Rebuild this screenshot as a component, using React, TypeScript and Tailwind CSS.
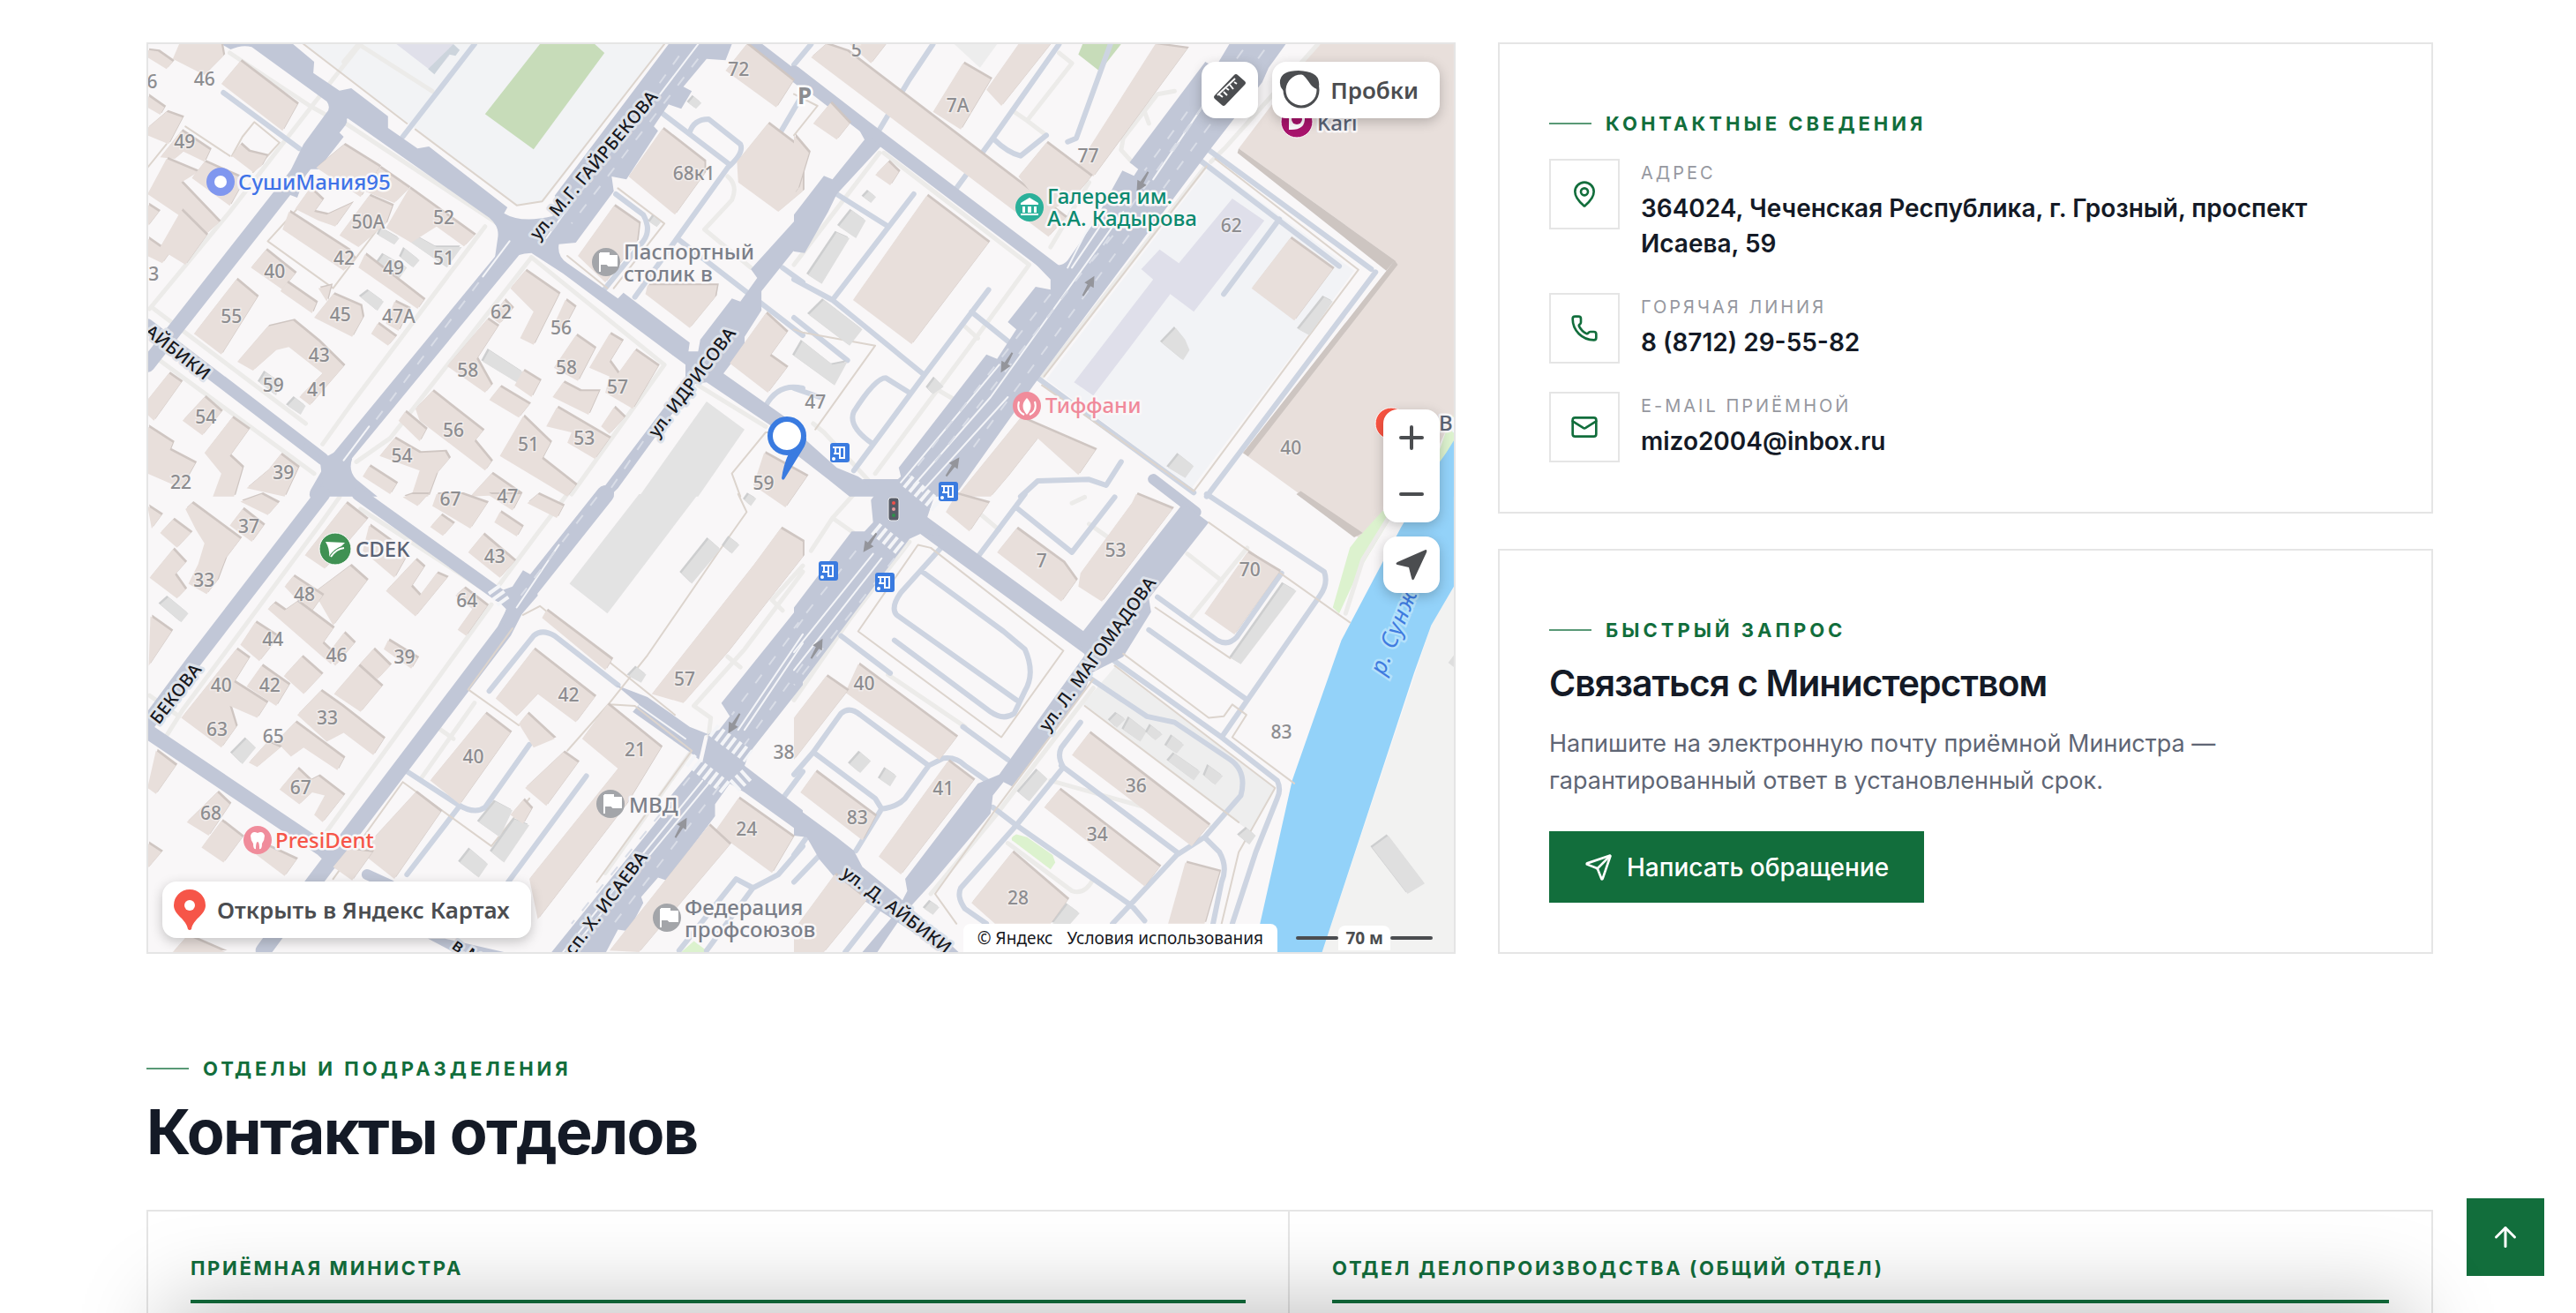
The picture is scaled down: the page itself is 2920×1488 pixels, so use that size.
import { ArrowUp, Mail, MapPin, Phone, Send } from "lucide-react";
import type { ReactNode } from "react";

type Label = [string, number, number];

type Tile = {
  x: number;
  y: number;
  sx: number;
  sy: number;
  areas: [string, string][];
  paths: string[];
  drives: string[];
  roads: [string, number][];
  junctions: string[];
  fences: string[];
  buildings: string[];
  sheds: string[];
  lanes: string[];
  dashes: string[];
  zebras: string[];
  numbers: Label[];
};

// every tile keeps its own coordinate grid
const tiles: Tile[] = [
  {
    x: 160,
    y: 40,
    sx: 1 / 2.0907,
    sy: 1 / 3,
    areas: [
      ["M385 30H1240L955 565L890 578Z", "#f2f3f5"],
      ["M945 30H1075L1098 60L930 388L815 268Z", "#c7dcb9"],
      ["M605 30H740L730 70L695 130Z", "#e0e0ea"],
      ["M740 30L755 50L745 70L730 65L695 133L680 115Z", "#ccd4dc"],
      ["M1340 1245L1430 1340L1320 1568H1180Z", "#e3e3e3"],
    ],
    paths: [
      "M520 30L405 240L210 600L20 930",
      "M210 60L400 240L450 280",
      "M480 295L850 645",
      "M480 90L515 30L690 190",
      "M815 650L500 1250L430 1390",
      "M925 755L590 1370L510 1450",
      "M925 755L1240 1120L1110 1380L1020 1560",
      "M30 930L390 1320",
      "M20 1080L410 1490",
      "M1320 1190L1480 1330",
      "M1390 480Q1415 510 1400 560L1335 660L1445 790",
    ],
    drives: [
      "M790 30L620 345",
      "M195 195L375 385",
      "M1235 265L1395 440L1270 690L1170 890",
      "M1300 330Q1310 285 1345 285L1420 370Q1430 400 1390 450",
      "M1125 540L1190 610Q1210 660 1190 700L1100 860",
      "M1270 690L1568 1020",
      "M1568 200L1515 330",
      "M1480 1260Q1510 1180 1568 1200",
      "M1520 790L1568 840",
    ],
    roads: [
      ["M470 290L360 490L15 1120", 17],
      ["M15 985L430 1440", 14],
      ["M890 710L460 1460L420 1560", 20],
      ["M1450 30L1568 160", 13],
    ],
    junctions: [
      "M190 30H360L410 90L408 128L470 188L498 180L585 275V315L655 385L682 378L868 585L860 605Q900 640 975 615L990 570L980 545L1250 30H1400L1385 85L1340 80L1285 175L1305 190L1280 250L1250 235L1215 310L1225 325L1150 490L1115 480L1120 530L1030 705L990 710Q985 750 1010 775L1130 895L1143 875L1300 1045L1297 1075H1320L1325 1035L1400 895L1420 905L1460 825L1445 795L1568 600V715L1545 735L1470 870V935L1430 1025V1055L1380 1150L1568 1340V1400L1340 1180L1310 1185L1130 1540L1110 1568H1080L1290 1170V1120L1000 810L925 740Q890 740 870 770L835 790L845 690Q850 650 825 620L490 283Q465 290 462 320L480 345L420 455L395 455L370 552L330 530L385 370L440 262Q450 245 440 225L262 40Q240 30 212 48Z",
      "M385 1385L430 1440L480 1400L500 1440Q490 1480 510 1510L560 1568H410L430 1520L425 1460L385 1410Z",
    ],
    fences: [
      "M650 320L890 578L950 565L1240 30",
      "M385 30L630 300",
      "M1130 520L1240 640L1120 860",
      "M1010 750L1105 860",
      "M215 410L240 345L268 295L328 365L265 465",
      "M370 590L300 700L455 860L560 660",
      "M105 310L210 410",
      "M15 450L60 370",
      "M1568 1350H1480L1400 1490L1420 1568",
    ],
    buildings: [
      "15,50 40,55 75,90 60,115 15,75",
      "90,30 190,30 195,70 150,135 75,80",
      "235,88 370,235 335,325 190,165",
      "15,205 55,245 45,270 15,245",
      "15,315 60,260 98,280 65,370 15,340",
      "95,325 163,390 150,430 100,395 80,420 45,415",
      "60,420 135,465 95,500 185,635 155,675 15,540",
      "150,430 245,490 210,580 120,485",
      "215,410 235,370 255,395 298,410 285,445 265,465",
      "15,575 42,600 15,650",
      "95,595 155,680 105,780 65,745 50,775 15,750 15,690 45,720",
      "480,372 565,448 520,550 415,450",
      "400,520 430,560 410,600 440,610 500,570 460,650 420,630 365,590",
      "565,450 635,520 600,570 530,530",
      "350,600 490,730 505,760 480,800 335,660",
      "540,545 595,580 580,640 515,720 470,680",
      "635,520 790,680 765,718 700,650 640,705 580,655",
      "295,730 365,810 335,865 260,790",
      "345,840 415,910 405,945 330,870",
      "420,860 450,850 440,905",
      "530,745 670,900 655,930 515,790",
      "225,830 275,890 190,1085 125,1015",
      "455,880 520,920 525,960 500,1025 410,960",
      "600,905 635,930 610,1005 580,980",
      "560,980 603,1025 585,1055 545,1015",
      "300,990 360,970 420,1040 480,1125 400,1258 375,1230 430,1150 350,1060 320,1070 265,1140 228,1110",
      "910,800 990,880 930,1052 898,1030 930,940 875,860",
      "860,900 880,930 850,980 830,960",
      "1005,900 1028,925 1000,1000 978,985",
      "820,965 845,990 795,1100 830,1190 815,1215 725,1125",
      "1030,1020 1075,1065 1035,1175 978,1130",
      "1110,1015 1140,1040 1110,1110 1130,1150 1170,1070 1225,1125 1165,1270 1100,1215 1110,1160 1062,1130",
      "850,1195 920,1255 895,1300 825,1240",
      "905,1140 945,1175 925,1230 885,1190",
      "1000,1180 1040,1210 1085,1210 1060,1290 975,1230",
      "985,1265 1110,1370 1075,1440 1010,1385 1020,1350 960,1330",
      "1120,1265 1145,1300 1110,1355 1090,1330",
      "905,1295 970,1385 950,1440 1030,1530 1010,1568 850,1430",
      "690,1210 810,1345 790,1380 830,1450 815,1480 660,1310 650,1270",
      "625,1280 675,1340 660,1380 610,1310",
      "600,1370 660,1420 720,1415 730,1440 700,1490 680,1568 640,1568 660,1480 565,1430",
      "540,1465 605,1525 590,1560 525,1500",
      "830,1490 900,1560 780,1568",
      "65,1150 95,1180 30,1310 15,1290 15,1240",
      "150,1230 190,1280 145,1360 98,1310",
      "215,1300 255,1340 210,1430 240,1470 220,1568 170,1568 190,1490 150,1420",
      "15,1330 75,1385 68,1410 128,1455 95,1540 15,1490",
      "330,1425 372,1470 340,1568 250,1540 300,1480",
      "1435,30 1545,155 1505,245 1385,120",
      "1235,318 1335,430 1335,470 1265,610 1155,480",
      "1485,300 1568,390 1568,530 1510,600 1415,500 1412,430",
      "1120,580 1180,640 1175,700 1100,840 1035,750",
      "1200,850 1365,850 1360,890 1300,995 1195,880",
      "1480,945 1530,1010 1490,1090 1530,1130 1485,1215 1395,1115",
    ],
    sheds: [
      "570,655 612,690 600,712 562,680",
      "650,680 700,720 760,720 725,790 640,705",
      "625,725 660,765 645,790 615,755",
      "575,745 630,790 610,830 560,775",
      "540,868 575,905 560,937 520,890",
      "825,1070 905,1145 890,1180 810,1110",
      "295,1145 330,1180 320,1225 280,1180",
      "365,1232 390,1260 378,1290 347,1260",
      "1310,208 1328,230 1315,250 1297,230",
      "1215,615 1232,635 1222,652 1205,635",
    ],
    lanes: ["M1320 30L1230 200", "M960 690L1010 590", "M873 700L810 820", "M540 1330L480 1445"],
    dashes: ["M1275 70L1100 420L960 690", "M1320 80L1020 640", "M800 840L550 1320", "M1190 1380L1100 1568"],
    zebras: [],
    numbers: [
      ["6", 26, 160], ["46", 150, 150], ["49", 103, 362], ["50А", 538, 635],
      ["52", 717, 620], ["51", 717, 760], ["49", 598, 793], ["42", 481, 760],
      ["40", 316, 803], ["3", 30, 812], ["55", 214, 958], ["45", 472, 952],
      ["47А", 610, 958], ["62", 853, 943], ["56", 995, 995], ["58", 774, 1140],
      ["58", 1008, 1130], ["57", 1129, 1198], ["43", 422, 1090], ["59", 313, 1190],
      ["41", 418, 1207], ["54", 153, 1300], ["56", 740, 1345], ["51", 918, 1393],
      ["53", 1050, 1372], ["54", 618, 1432], ["39", 337, 1488], ["22", 94, 1522],
      ["59", 1475, 1525], ["72", 1416, 118], ["68к1", 1310, 472],
    ],
  },
  {
    x: 900,
    y: 40,
    sx: 1 / 2.063,
    sy: 1 / 3,
    areas: [
      ["M975 440L1310 800L1200 1020L930 1540L590 1170Z", "#f2f3f6"],
      ["M675 30H765L715 122L665 65Z", "#c7dcb9"],
      ["M375 30H475L435 110Z", "#ededed"],
      ["M1543 1270L1500 1450L1440 1568H1543Z", "#dcf2ce"],
      ["M1543 1385L1505 1460L1480 1568H1543Z", "#93d2f9"],
      ["M1025 555L1100 630L935 940L880 880L700 1225L655 1180L840 830L812 795L855 728L900 775Z", "#dfdfea"],
      ["M1225 30H1543V1290L1510 1390L1320 1705L1050 1420L1405 765L1040 385Z", "#e8dfdb"],
      ["M1040 385L1405 765L1385 800L1037 400ZM1405 765L1050 1420L1062 1432L1412 780Z", "#cdc5c1"],
    ],
    paths: [
      "M620 60L650 95L545 290L510 255",
      "M545 290L590 340",
      "M890 190L850 200L770 350L765 390L790 430",
      "M820 260L830 300",
      "M200 400L0 780",
      "M210 400L550 780L410 1060L190 1490",
      "M960 450L580 1160",
      "M1225 30L1010 380L975 430",
      "M600 720L690 500",
      "M400 990L430 1030",
      "M330 1200L400 1260",
      "M45 1320L70 1350L185 1530",
    ],
    drives: [
      "M325 30L270 150L200 320",
      "M620 30L465 350L380 520",
      "M465 350Q500 400 530 410L590 340",
      "M740 30L660 350L640 362",
      "M100 540L215 645",
      "M280 540L90 900",
      "M0 830L90 900L305 1155L140 1480",
      "M455 865L305 1155",
      "M415 940L500 1040",
      "M0 960L125 1105",
      "M270 1215L215 1165Q190 1165 140 1280Q125 1330 185 1390",
      "M0 1200L60 1230",
      "M945 420L1275 785",
      "M970 390L1350 795",
      "M1135 625L1005 880",
      "M1360 805L965 1568",
      "M565 1160L935 1555",
      "M765 1450L730 1530L690 1510L570 1515L530 1568",
      "M40 30L0 100",
    ],
    roads: [["M0 125L165 310L610 800", 15]],
    junctions: [
      "M1018 30L985 110L962 90L785 432L805 455L795 478L768 460L700 640L640 765Q620 800 590 760L560 770L600 830V865L565 855L500 975L520 1000L475 1100L450 1085L245 1470L250 1500L200 1568H375L560 1190L975 385L1095 160L1110 110L1150 30Z",
      "M150 315L205 375L100 540L80 600L25 740L0 735V610L70 478L90 490L165 355Z",
      "M0 1340L100 1470L150 1500L220 1568H130L80 1510L0 1420Z",
    ],
    fences: [
      "M985 420L1320 797L1200 1030L935 1550L580 1190",
      "M965 445L585 1160",
      "M0 200L55 240L0 340",
      "M0 1000L20 1010L190 1055L50 1340",
    ],
    buildings: [
      "75,30 125,55 635,620 595,685 40,75",
      "130,30 215,30 180,95",
      "395,95 460,150 390,320 325,260",
      "525,30 600,30 485,240 450,185",
      "845,30 920,45 700,480 665,440",
      "590,365 695,480 650,560 590,600 525,480",
      "85,230 130,300 100,355 45,300",
      "220,430 245,465 225,510 190,475",
      "310,545 455,705 275,1050 138,900",
      "0,340 35,400 10,520 0,540",
      "1160,690 1260,795 1170,970 1070,860",
      "530,1300 705,1410 665,1495 570,1370 500,1500 460,1568 380,1568",
      "-70,1420 30,1500 -20,1605 -95,1530",
    ],
    sheds: [
      "135,595 168,630 145,690 105,650",
      "100,670 130,690 65,845 33,815",
      "70,900 160,1000 130,1055 35,950",
      "20,1040 90,1120 125,1110 95,1190 0,1090",
      "330,1165 350,1195 325,1220 312,1200",
      "175,530 192,550 180,570 162,550",
      "1240,890 1260,905 1205,1020 1180,1000",
      "893,995 915,1035 925,1070 910,1105 860,1045",
      "900,1425 935,1465 915,1505 875,1470",
    ],
    lanes: ["M975 200L840 490", "M770 600L460 1230L280 1530", "M480 1120L250 1520", "M500 1230L300 1550", "M700 620L640 790", "M720 640L650 790"],
    dashes: ["M1050 50L720 720L330 1450", "M1100 50L980 290L420 1400", "M920 260L820 460", "M600 880L270 1500", "M780 620L690 780", "M930 300L870 430"],
    zebras: ["M265 1515L335 1600"],
    numbers: [
      ["5", 146, 50], ["7А", 383, 240], ["77", 688, 410], ["62", 1023, 647],
      ["47", 50, 1247], ["40", 1162, 1403],
    ],
  },
  {
    x: 160,
    y: 560,
    sx: 1 / 2.0907,
    sy: 1 / 2.958,
    areas: [
      ["M1180 0H1320L1105 400L1015 300Z", "#e3e3e3"],
      ["M1310 1498L1345 1535H1280Z", "#dcf2ce"],
    ],
    paths: [
      "M470 10L430 90L100 720L60 810",
      "M20 675L90 745",
      "M520 50L835 340",
      "M1010 0L940 130L840 320",
      "M830 370L440 1130",
      "M790 700L665 950",
      "M700 780L740 820",
      "M1568 260L1430 520L1310 710L1350 750L1345 810",
      "M1390 545L1420 580",
      "M1300 870L1100 1270",
      "M1568 240L1495 355L1520 390",
    ],
    drives: [
      "M825 660L930 475Q950 450 980 475L1130 640",
      "M625 925L750 1040Q790 1075 815 1050L920 840",
      "M755 1045L630 1275",
      "M1055 945L870 1300",
      "M1275 1530L1410 1290L1450 1320L1510 1275L1568 1180",
      "M1450 1320L1340 1530",
      "M1568 930L1510 1040",
    ],
    roads: [
      ["M430 0L125 560L10 780", 17],
      ["M15 795L430 1190L460 1230", 17],
      ["M1100 0L920 320", 20],
      ["M900 350L860 460L410 1300L290 1530", 18],
      ["M515 0L850 340", 15],
      ["M535 1275L590 1310", 12],
    ],
    junctions: [
      "M830 335L880 310L905 255L930 275L940 340L870 455L855 430L865 385Z",
      "M1125 640L1200 680L1300 780L1345 805L1330 900L1305 870L1165 730L1180 705Z",
      "M1568 360L1375 700L1395 745L1370 790L1335 810L1320 900L1250 1020L1255 1040L970 1540H1100L1130 1460L1155 1465L1190 1370L1185 1350L1225 1285L1245 1295L1360 1080V1040L1395 970L1430 1000L1568 1140V1060L1430 910L1440 870L1568 640Z",
      "M680 1490H720L860 1535H740Z",
    ],
    fences: [
      "M1415 0L1435 60L1370 190L1200 540L1110 700L1010 860",
      "M880 450L775 655L895 775",
      "M905 405L945 375L1265 740",
      "M620 965L830 1180L920 1020",
      "M620 965L455 1290",
      "M1110 705L1170 710L1305 860L1080 1300",
    ],
    buildings: [
      "15,40 48,70 25,115",
      "75,85 118,130 85,180 45,130",
      "120,30 235,150 200,215 180,290 155,335 112,300 135,235 150,165 130,120 105,50",
      "240,50 290,105 262,160 210,105",
      "285,0 325,30 300,70 235,25",
      "75,185 105,230 80,270 105,320 85,350 20,280",
      "22,410 72,460 18,575",
      "485,30 535,85 435,250 388,205",
      "540,105 632,200 600,280 525,190",
      "650,220 670,245 640,310 660,340 700,265 725,280 650,410 580,325",
      "495,240 535,290 455,440 410,330",
      "360,275 430,340 400,400 340,310",
      "315,365 340,390 370,360 455,450 430,500 460,540 450,570 300,385",
      "480,465 505,500 460,575 440,540",
      "270,430 325,480 280,560 235,505",
      "225,520 255,550 220,630 298,700 275,750 210,710 225,780 190,850 95,750",
      "285,575 350,640 320,710 250,645",
      "380,545 428,605 385,670 338,610",
      "585,490 655,550 640,585 575,520",
      "550,520 590,575 560,620 515,575",
      "515,575 570,645 520,730 457,670",
      "425,660 475,710 575,820 550,875 480,800 440,830 370,740",
      "365,765 480,885 465,925 385,850 355,880 320,830",
      "300,830 330,850 275,915 255,900",
      "370,920 400,960 420,945 480,1010 430,1100 410,1075 435,1010 405,1000 375,1040 328,990",
      "180,1000 210,1040 160,1145 108,1100",
      "190,1095 240,1150 195,1235 143,1185",
      "35,860 82,910 35,1005 15,985",
      "15,1170 48,1200 15,1255",
      "300,1180 368,1225 340,1280 265,1200",
      "640,0 680,0 655,40 620,10",
      "700,0 760,0 820,30 780,115 690,40",
      "820,0 900,0 880,55",
      "940,0 1000,40 985,80 915,30",
      "710,70 740,100 715,140 685,110",
      "850,60 903,110 890,142 837,95",
      "810,135 885,225 850,280 775,195",
      "765,315 820,375 770,475 750,455 785,385 745,340",
      "650,1000 710,1065 600,1290 520,1200",
      "490,1190 548,1200 500,1295 455,1250",
      "815,735 875,800 755,1040 685,960",
      "930,520 1075,680 1030,765 940,670 890,745 840,685",
      "915,735 980,820 930,850 895,770",
      "1000,865 1035,900 960,1045 910,985",
      "905,1025 925,1055 905,1105 875,1075",
      "1105,705 1232,850 1150,1040 940,1425 920,1290 1130,920 1045,820",
      "960,390 1115,555 1100,590 950,415",
      "1515,115 1568,160 1568,210 1490,350 1390,530 1285,700 1210,670 1450,240",
      "1415,1020 1545,1150 1495,1270 1360,1130",
      "1345,1110 1395,1175 1180,1535 1110,1530",
      "75,1535 110,1480 200,1535",
    ],
    sheds: [
      "1345,150 1373,185 1305,300 1280,265",
      "1395,145 1418,170 1400,200 1380,175",
      "65,345 112,400 95,430 45,370",
      "250,820 272,850 240,905 215,870",
      "840,1030 880,1060 850,1150 800,1100",
      "885,1090 920,1110 860,1235 830,1200",
      "780,1190 822,1240 800,1285 755,1235",
      "1175,580 1197,605 1185,632 1155,610",
      "1440,0 1458,15 1445,40 1430,20",
    ],
    lanes: ["M1568 470L1415 790", "M1568 500L1430 790", "M1330 960L1000 1535", "M1345 970L1015 1535", "M1180 710L1290 820", "M990 170L890 380"],
    dashes: ["M1568 420L1400 740", "M1568 570L1430 840", "M1300 950L1020 1440", "M1370 980L1120 1440", "M1080 10L900 340"],
    zebras: ["M1300 890L1390 990", "M1355 790L1440 880", "M1405 980L1440 935", "M835 315L860 365"],
    numbers: [
      ["67", 733, 18], ["47", 868, 10], ["37", 255, 108], ["43", 838, 210],
      ["33", 149, 290], ["48", 387, 337], ["64", 772, 357], ["44", 312, 487],
      ["46", 463, 540], ["39", 624, 547], ["40", 190, 641], ["42", 305, 641],
      ["57", 1288, 620], ["42", 1013, 675], ["33", 441, 750], ["63", 180, 790],
      ["65", 313, 812], ["21", 1171, 858], ["40", 787, 881], ["38", 1523, 867],
      ["67", 378, 985], ["68", 165, 1070], ["24", 1435, 1123],
    ],
  },
  {
    x: 900,
    y: 560,
    sx: 1 / 2.063,
    sy: 1 / 2.958,
    areas: [
      ["M1543 310L1490 440L1235 1535H1543Z", "#f2f2f1"],
      ["M1300 180L1370 50L1400 70L1320 260L1275 400L1260 380Z", "#dcf2ce"],
      ["M1543 -180L1420 110L1280 490L1165 960L1075 1535H1235L1450 600L1490 440L1543 310Z", "#93d2f9"],
      ["M520 1140Q505 1150 510 1160L600 1258L611 1235L605 1210L545 1150Z", "#dcf2ce"],
      ["M750 580L1125 985L1065 1130L675 705Z", "#eeeeee"],
      ["M1543 540L1530 565L1543 580Z", "#dedede"],
      ["M1175 0H1375L1380 50L1320 145Z", "#e8dfdb"],
      ["M1175 0L1310 145L1330 130L1320 120L1185 -10Z", "#cdc5c1"],
    ],
    paths: [
      "M920 200L1000 290",
      "M1060 180L930 410",
      "M500 1170L650 1330Q680 1345 700 1290",
      "M40 190L90 80L140 130",
      "M90 80L140 0",
      "M270 160L130 420L0 690",
      "M430 60L480 120",
      "M220 605L400 780",
      "M680 10L650 30",
      "M690 100L730 140",
      "M700 650L470 1080L320 1340",
      "M600 960L970 1110",
      "M1390 80L1330 220L1290 400",
    ],
    drives: [
      "M350 170L250 330Q225 380 240 405L520 690",
      "M235 490L460 730Q490 760 515 735L540 660Q565 600 540 520L490 460L300 260",
      "M110 475L225 600",
      "M395 780L500 890",
      "M540 0L430 210",
      "M520 45L650 195L750 10",
      "M965 0L1240 260Q1250 300 1230 340L1000 815",
      "M850 345L990 490Q1015 510 1035 480L1140 265",
      "M830 455L1060 690",
      "M750 560L1000 815L1130 960Q1140 990 1130 1020L1080 1200L1025 1440",
      "M685 610L825 745L890 765L1020 890Q1060 930 1045 1010L960 1150L895 1210L745 1440",
      "M960 1150L995 1200Q1015 1250 1000 1300L980 1440",
      "M625 910L900 1205",
      "M670 765L625 850Q615 880 630 915L520 1110L390 1320Q380 1350 400 1390L450 1440",
      "M465 1050L520 1110L790 1380L820 1430",
      "M0 940L45 865L110 735Q130 710 155 740L315 910L350 885Q380 880 400 910L450 960",
      "M45 865L190 1020L205 1055L145 1195",
      "M315 910L260 1020Q240 1050 205 1055",
      "M0 1300L60 1210",
      "M0 1210L30 1150",
      "M210 1370L120 1535",
    ],
    roads: [
      ["M270 70L690 510", 20],
      ["M840 -50L940 60", 12],
    ],
    junctions: [
      "M190 0L180 20L185 95L165 125H135L0 380V670L270 150L300 130L340 140L310 85L330 0L370 -50H160Z",
      "M910 30L970 95L830 350L835 395L770 545L695 600L680 660L510 980L490 965L465 1010L460 1070L325 1300L255 1410L195 1535H160L240 1400L265 1330L260 1290L430 970L480 940L650 600L680 540L665 480Z",
      "M0 1045L100 1150L140 1195L160 1250L245 1350L385 1535H350L150 1350L110 1310L60 1225L30 1150L0 1145Z",
    ],
    fences: [
      "M290 170L150 460L485 815L630 525L320 180Z",
      "M970 95L1300 430",
      "M770 535L970 750L1005 745L1025 705L1058 740L1025 815L1170 970",
      "M845 380L1020 550",
      "M750 575L1125 985L1040 1200L1000 1440",
      "M680 710L1040 1100",
      "M700 620L470 1060L330 1340L380 1440",
    ],
    buildings: [
      "520,115 630,230 660,290 625,360 475,195",
      "800,0 885,50 720,360 665,310 670,265 790,30",
      "380,0 455,30 410,125 355,60",
      "1060,195 1135,260 1030,470 960,400",
      "150,570 380,815 340,890 120,665",
      "75,610 125,660 0,890 0,750",
      "50,930 190,1080 160,1160 15,1000",
      "360,895 420,960 250,1275 198,1215",
      "690,800 970,1110 930,1180 650,875",
      "620,990 855,1250 820,1315 585,1050",
      "510,1200 640,1360 600,1440 470,1440 415,1370",
      "915,1235 995,1265 960,1440 875,1440",
      "95,1275 170,1360 70,1535 0,1535 0,1460",
    ],
    sheds: [
      "1145,300 1175,325 1045,570 1022,550",
      "155,865 180,895 155,935 130,905",
      "215,920 240,945 225,980 200,955",
      "570,925 593,955 550,1030 525,1000",
      "785,750 825,795 810,830 770,790",
      "755,735 775,755 755,783 738,760",
      "835,775 862,805 845,825 825,800",
      "885,810 912,840 895,870 870,845",
      "890,870 950,930 935,960 875,895",
      "970,910 1003,945 985,975 960,945",
      "1060,1120 1080,1145 1065,1175 1040,1145",
      "1390,1145 1475,1305 1435,1340 1352,1185",
      "320,1365 340,1385 325,1410 305,1390",
      "640,1375 668,1405 645,1443 605,1440",
    ],
    lanes: ["M185 200L0 530", "M205 215L0 590"],
    dashes: ["M145 190L0 450", "M235 215L0 640"],
    zebras: ["M190 115L255 190"],
    numbers: [
      ["7", 579, 225], ["53", 752, 190], ["70", 1066, 254], ["40", 164, 636],
      ["83", 1140, 800], ["36", 800, 980], ["41", 349, 988], ["83", 148, 1087],
      ["34", 709, 1142], ["28", 524, 1355],
    ],
  },
];

const streets: [string, number, number, number][] = [
  ["ул. М.Г. ГАЙРБЕКОВА", 610, 273, -50],
  ["ул. ИДРИСОВА", 745, 497, -53],
  ["АЙБИКИ", 163, 378, 38],
  ["БЕКОВА", 180, 822, -52],
  ["сп. Х. ИСАЕВА", 650, 1084, -53],
  ["ул. Л. МАГОМАДОВА", 1188, 830, -54],
  ["ул. Д. АЙБИКИ", 953, 992, 37],
  ["в.М", 511, 1074, 36],
];

const places: [string[], number, number, string][] = [
  [["СушиМания95"], 270, 215, "#3f73e8"],
  [["Паспортный", "столик в"], 707, 294, "#7b7f89"],
  [["Галерея им.", "А.А. Кадырова"], 1187, 231, "#0b8a70"],
  [["Тиффани"], 1185, 468, "#f0899a"],
  [["CDEK"], 403, 631, "#5a6375"],
  [["PresiDent"], 312, 961, "#f65548"],
  [["МВД"], 713, 921, "#7b7f89"],
  [["Федерация", "профсоюзов"], 776, 1037, "#7b7f89"],
  [["Kari"], 1493, 148, "#5a6375"],
  [["Ви"], 1631, 488, "#5a6375"],
];

// centre of each arrow and its turn
const arrows: [number, number, number][] = [
  [1295, 206, 210],
  [1234, 324, 30],
  [1141, 411, 210],
  [1080, 529, 35],
  [986, 615, 215],
  [926, 735, 30],
  [832, 820, 210],
  [772, 938, 30],
];

const flags = [
  [687, 297],
  [692, 911],
  [756, 1040],
];

const stops = [
  [952, 513],
  [1075, 557],
  [939, 647],
  [1003, 660],
];

function Layer({ tile, children }: { tile: Tile; children: ReactNode }) {
  return (
    <g transform={`translate(${tile.x} ${tile.y}) scale(${tile.sx} ${tile.sy})`}>
      {children}
    </g>
  );
}

function Lines({ list, color, width, dash }: { list: string[]; color: string; width: number; dash?: string }) {
  return (
    <path
      d={list.join("")}
      fill="none"
      stroke={color}
      strokeWidth={width}
      strokeDasharray={dash}
      strokeLinecap={dash ? "butt" : "round"}
      strokeLinejoin="round"
      vectorEffect="non-scaling-stroke"
    />
  );
}

function CityMap() {
  return (
    <svg
      viewBox="168 50 1480 1029"
      preserveAspectRatio="xMidYMid slice"
      className="absolute inset-0 h-full w-full font-['Noto_Sans',sans-serif]"
      role="img"
      aria-label="Карта: проспект Исаева, 59"
    >
      <rect x="160" y="40" width="1500" height="1050" fill="#f9f7f8" />
      {tiles.map((t, i) => (
        <Layer key={i} tile={t}>
          {t.areas.map(([d, fill]) => (
            <path key={d} d={d} fill={fill} />
          ))}
          <Lines list={t.paths} color="#ecebe9" width={5} />
          <Lines list={t.drives} color="#cdd4e1" width={6} />
        </Layer>
      ))}
      {tiles.map((t, i) => (
        <Layer key={i} tile={t}>
          {t.roads.map(([d, w]) => (
            <Lines key={d} list={[d]} color="#c1c7d7" width={w} />
          ))}
          <path d={t.junctions.join("")} fill="#c1c7d7" />
        </Layer>
      ))}
      {tiles.map((t, i) => (
        <Layer key={i} tile={t}>
          <Lines list={t.lanes} color="#f4f5f8" width={2} />
          <Lines list={t.dashes} color="#d9dde7" width={2} dash="12 14" />
          <Lines list={t.zebras} color="#f4f5f8" width={16} dash="4 4" />
          <Lines list={t.fences} color="#dcd4cd" width={2} />
          {t.sheds.map((p) => (
            <g key={p}>
              <polygon points={p} fill="#cdcecf" transform="translate(-4 -5)" />
              <polygon points={p} fill="#dfdfdf" />
            </g>
          ))}
          {t.buildings.map((p) => (
            <g key={p}>
              <polygon points={p} fill="#cfc6c2" transform="translate(4 -6)" />
              <polygon points={p} fill="#e8dfdb" />
            </g>
          ))}
        </Layer>
      ))}

      {arrows.map(([x, y, r]) => (
        <path
          key={`${x}-${y}`}
          d="M-1 13L-2 -1H-6L0 -13L6 -1H2L1 13Z"
          fill="#94959b"
          transform={`translate(${x} ${y}) rotate(${r})`}
        />
      ))}

      {tiles.flatMap((t, i) =>
        t.numbers.map(([n, x, y]) => (
          <text
            key={`${i}-${x}-${y}`}
            x={t.x + x * t.sx}
            y={t.y + y * t.sy + 7}
            textAnchor="middle"
            fill="#8d8d90"
            stroke="#f9f7f8"
            strokeOpacity="0.5"
            strokeWidth="3"
            paintOrder="stroke"
            className="text-[21px] font-medium"
          >
            {n}
          </text>
        )),
      )}

      {streets.map(([name, x, y, r]) => (
        <text
          key={name}
          transform={`translate(${x} ${y}) rotate(${r})`}
          fill="#17181d"
          stroke="#dde2ea"
          strokeWidth="6"
          strokeLinejoin="round"
          paintOrder="stroke"
          className="text-[20px] font-medium tracking-wide"
        >
          {name}
        </text>
      ))}
      <text
        transform="translate(1569 766) rotate(-68)"
        fill="#3f7be0"
        stroke="#b4e1fb"
        strokeWidth="5"
        paintOrder="stroke"
        className="text-[26px] tracking-wider italic"
      >
        р. Сунжа
      </text>

      {places.map(([lines, x, y, color]) => (
        <text
          key={lines[0]}
          x={x}
          y={y}
          fill={color}
          stroke="#f9f7f8"
          strokeWidth="5"
          strokeLinejoin="round"
          paintOrder="stroke"
          className="text-[24px] font-medium"
        >
          {lines.map((line, i) => (
            <tspan key={line} x={x} dy={i ? 25 : 0}>
              {line}
            </tspan>
          ))}
        </text>
      ))}
      <text
        x="904"
        y="118"
        fill="#8b8d91"
        stroke="#fff"
        strokeWidth="5"
        paintOrder="stroke"
        className="text-[26px] font-bold"
      >
        P
      </text>

      <circle cx="250" cy="206" r="16" fill="#8097ef" />
      <circle cx="250" cy="206" r="7" fill="#fff" />
      {flags.map(([x, y]) => (
        <g key={x} transform={`translate(${x} ${y})`}>
          <circle r="16" fill="#a3a5a9" />
          <path d="M-7 -10V11M-7 -10H3V-7H12V4H3L1 2H-7" stroke="#fff" strokeWidth="2" fill="#fff" />
        </g>
      ))}
      <g transform="translate(1167 235)">
        <circle r="16" fill="#2bb09a" />
        <path d="M-10 -5L0 -11L10 -5V-3H-10ZM-8 -1H-5V6H-8ZM-2 -1H2V6H-2ZM5 -1H8V6H5ZM-10 7H10V9H-10Z" fill="#fff" />
      </g>
      <g transform="translate(1164 460)">
        <circle r="16" fill="#f08c9b" />
        <path d="M0 -9Q9 0 0 10Q-9 0 0 -9Z" fill="#fff" />
        <path d="M-9 -5Q-12 6 -3 10M9 -5Q12 6 3 10" fill="none" stroke="#fff" strokeWidth="2" />
      </g>
      <g transform="translate(380 622)">
        <circle r="18" fill="#3f9153" stroke="#fff" />
        <path d="M-11 -8L11 -7L7 -3Q-1 0 -6 7L-7 9Q-6 0 -11 -8Z" fill="#fff" />
        <path d="M-5 9Q1 0 10 -1" stroke="#fff" strokeWidth="2" fill="none" />
      </g>
      <g transform="translate(292 952)">
        <circle r="16" fill="#f08c9b" />
        <path d="M-8 -5Q-6 -11 0 -8Q6 -11 8 -5Q8 0 5 4Q5 11 2 10Q2 2 0 2Q-2 2 -2 10Q-5 11 -5 4Q-8 0 -8 -5Z" fill="#fff" />
      </g>
      <g transform="translate(1470 138)">
        <circle r="18" fill="#a8146c" stroke="#fff" />
        <path d="M-9 -7L9 -5Q10 10 -9 9Z" fill="#fff" />
        <circle cy="-3" r="6" fill="#a8146c" />
      </g>
      <circle cx="1577" cy="480" r="18" fill="#fa5442" stroke="#fff" />

      {stops.map(([x, y]) => (
        <g key={x} transform={`translate(${x} ${y})`}>
          <rect x="-11" y="-11" width="22" height="22" rx="3" fill="#3a7be0" />
          <path d="M-8 -6H5M-5 -6V2M-7 1H-1M0 -6V6H6M5 -7V7" stroke="#fff" strokeWidth="2" fill="none" />
          <circle cx="-7" cy="7" r="2" fill="#fff" />
        </g>
      ))}
      <g transform="translate(1013 577)">
        <rect x="-6" y="-13" width="12" height="26" rx="3" fill="#575b66" stroke="#e8e9ec" />
        <circle cy="-7" r="2" fill="#f0504a" />
        <circle r="2" fill="#e79a9d" />
        <circle cy="7" r="2" fill="#2f8f4c" />
      </g>

      <path d="M894 514L914 496Q914 503 910 509L889 543Q887 545 886 542Q888 527 894 514Z" fill="#3a7be0" />
      <circle cx="892" cy="494" r="19" fill="#fff" stroke="#3a7be0" strokeWidth="6" />
    </svg>
  );
}

const mapButton =
  "flex h-16 items-center justify-center rounded-2xl bg-white text-[#4b4d50] shadow-[0_4px_14px_rgba(0,0,0,0.22)]";

function MapCard() {
  return (
    <section className="relative overflow-hidden border-2 border-[#e5e5e5] font-['Noto_Sans',sans-serif]">
      <CityMap />
      <div className="absolute top-5 right-4 flex gap-4">
        <button type="button" aria-label="Линейка" className={`${mapButton} w-16`}>
          <svg viewBox="0 0 36 36" className="h-9 w-9" fill="none">
            <path d="M1 24L23 1Q25 -1 27 1L35 8Q37 10 35 12L13 35Q11 37 9 35L1 28Q-1 26 1 24Z" fill="currentColor" />
            <path d="M6 23L10 26M11 20L15 24M14 16L17 18M18 12L22 17M23 9L26 11" stroke="#fff" strokeWidth="2" />
            <path d="M4 24L24 5" stroke="#fff" strokeWidth="2" />
          </svg>
        </button>
        <button type="button" className={`${mapButton} gap-3 pr-6 pl-2 text-[26px] font-semibold`}>
          <svg viewBox="0 0 46 46" className="h-[46px] w-[46px]" fill="none">
            <circle cx="25" cy="23" r="19" stroke="currentColor" strokeWidth="3" />
            <path
              d="M5 24Q0 19 1 12Q3 1 22 1Q44 2 45 14Q46 20 43 22Q38 21 33 13Q27 4 22 4Q14 6 8 17Q8 22 5 24Z"
              fill="currentColor"
            />
          </svg>
          Пробки
        </button>
      </div>
      <div className="absolute top-[414px] right-4 flex w-16 flex-col gap-4">
        <div className="flex flex-col rounded-2xl bg-white text-[#4b4d50] shadow-[0_4px_14px_rgba(0,0,0,0.22)]">
          <button type="button" aria-label="Приблизить" className="flex h-16 items-center justify-center">
            <svg viewBox="0 0 28 28" className="h-7 w-7" stroke="currentColor" strokeWidth="4" strokeLinecap="round">
              <path d="M2 14H26M14 2V26" />
            </svg>
          </button>
          <button type="button" aria-label="Отдалить" className="flex h-16 items-center justify-center">
            <svg viewBox="0 0 28 28" className="h-7 w-7" stroke="currentColor" strokeWidth="4" strokeLinecap="round">
              <path d="M2 14H26" />
            </svg>
          </button>
        </div>
        <button type="button" aria-label="Моё местоположение" className={mapButton}>
          <svg viewBox="0 0 36 36" className="h-9 w-9" fill="currentColor">
            <path d="M34 1Q36 1 35 4L21 34Q19 37 18 33L15 21L2 18Q-1 17 2 15Z" />
          </svg>
        </button>
      </div>
      <a
        href="#yandex"
        className="absolute bottom-4 left-4 flex h-16 items-center gap-3 rounded-2xl bg-white pr-6 pl-3 text-[26px] font-semibold text-[#4b4d50] shadow-[0_4px_14px_rgba(0,0,0,0.22)]"
      >
        <svg viewBox="0 0 38 46" className="h-[46px] w-[38px]">
          <path d="M19 0A18 18 0 0 1 37 18C37 29 23 33 21 45Q19 47 17 45C15 33 1 29 1 18A18 18 0 0 1 19 0Z" fill="#f65548" />
          <circle cx="19" cy="18" r="6" fill="#fff" />
        </svg>
        Открыть в Яндекс Картах
      </a>
      <div className="absolute right-[200px] bottom-0 flex h-8 items-center gap-4 rounded-t-lg bg-white px-4 text-[19px] text-[#17181d]">
        <span>© Яндекс</span>
        <a href="#terms">Условия использования</a>
      </div>
      <div className="absolute right-6 bottom-0 flex h-8 items-center text-[19px] font-bold text-[#4b4d50]">
        <span className="h-1 w-12 rounded-full bg-[#4b4d50]" />
        <span className="rounded-t-lg bg-white px-2">70 м</span>
        <span className="h-1 w-12 rounded-full bg-[#4b4d50]" />
      </div>
    </section>
  );
}

function Eyebrow({ children }: { children: ReactNode }) {
  return (
    <p className="flex items-center gap-4 text-[22px] leading-8 font-bold tracking-[4px] text-[#126e3c] uppercase">
      <span className="h-[2px] w-12 bg-[#126e3c] opacity-70" />
      {children}
    </p>
  );
}

function ContactRow({ icon, label, children }: { icon: ReactNode; label: string; children: ReactNode }) {
  return (
    <div className="flex items-start gap-6">
      <span className="flex size-20 shrink-0 items-center justify-center border-2 border-[#e5e5e5] text-[#126e3c]">
        {icon}
      </span>
      <div className="pb-1">
        <p className="text-[20px] leading-8 tracking-[3px] text-[#9698a0] uppercase">{label}</p>
        <div className="mt-1 text-[28px] leading-10 font-semibold text-[#141a26]">{children}</div>
      </div>
    </div>
  );
}

function Department({ title }: { title: string }) {
  return (
    <section className="px-12 py-12">
      <h3 className="border-b-4 border-[#126e3c] pb-5 text-[22px] leading-8 font-bold tracking-[0.12em] text-[#126e3c] uppercase">
        {title}
      </h3>
    </section>
  );
}

export default function App() {
  return (
    <div className="relative h-screen overflow-hidden bg-white pt-12 pr-[162px] pl-[166px] font-[Inter,'Liberation_Sans',sans-serif]">
      <div className="grid grid-cols-[1.4fr_1fr] gap-12">
        <MapCard />
        <div className="flex flex-col gap-10">
          <section className="border-2 border-[#e5e5e5] px-14 pt-[74px] pb-14">
            <Eyebrow>Контактные сведения</Eyebrow>
            <div className="mt-6 flex flex-col gap-8">
              <ContactRow icon={<MapPin size={32} strokeWidth={2} />} label="Адрес">
                364024, Чеченская Республика, г. Грозный, проспект Исаева, 59
              </ContactRow>
              <ContactRow icon={<Phone size={32} strokeWidth={2} />} label="Горячая линия">
                <a href="tel:88712295582">8 (8712) 29-55-82</a>
              </ContactRow>
              <ContactRow icon={<Mail size={32} strokeWidth={2} />} label="E-mail приёмной">
                <a href="mailto:mizo2004@inbox.ru">mizo2004@inbox.ru</a>
              </ContactRow>
            </div>
          </section>
          <section className="border-2 border-[#e5e5e5] px-14 pt-[74px] pb-14">
            <Eyebrow>Быстрый запрос</Eyebrow>
            <h2 className="mt-5 text-[41px] leading-[48px] font-semibold tracking-tight text-[#141a26]">
              Связаться с Министерством
            </h2>
            <p className="mt-6 max-w-[800px] text-[27px] leading-[42px] text-[#5f6675]">
              Напишите на электронную почту приёмной Министра — гарантированный ответ в установленный срок.
            </p>
            <a
              href="mailto:mizo2004@inbox.ru"
              className="mt-9 flex h-[81px] w-fit items-center gap-4 bg-[#126e3c] px-10 text-[28px] font-medium text-white"
            >
              <Send size={32} strokeWidth={2} />
              Написать обращение
            </a>
          </section>
        </div>
      </div>

      <div className="mt-[114px]">
        <Eyebrow>Отделы и подразделения</Eyebrow>
        <h1 className="mt-4 text-[70px] leading-[80px] font-bold tracking-tight text-[#141a26]">
          Контакты отделов
        </h1>
        <div className="mt-12 grid grid-cols-2 divide-x-2 divide-[#e5e5e5] border-2 border-[#e5e5e5]">
          <Department title="Приёмная министра" />
          <Department title="Отдел делопроизводства (общий отдел)" />
        </div>
      </div>

      <button
        type="button"
        aria-label="Наверх"
        className="absolute right-9 bottom-[42px] flex size-[88px] items-center justify-center bg-[#126e3c] text-white"
      >
        <ArrowUp size={36} strokeWidth={2} />
      </button>
      <div className="pointer-events-none absolute inset-x-[200px] top-full h-40 shadow-[0_0_100px_10px_rgba(0,0,0,0.25)]" />
    </div>
  );
}
